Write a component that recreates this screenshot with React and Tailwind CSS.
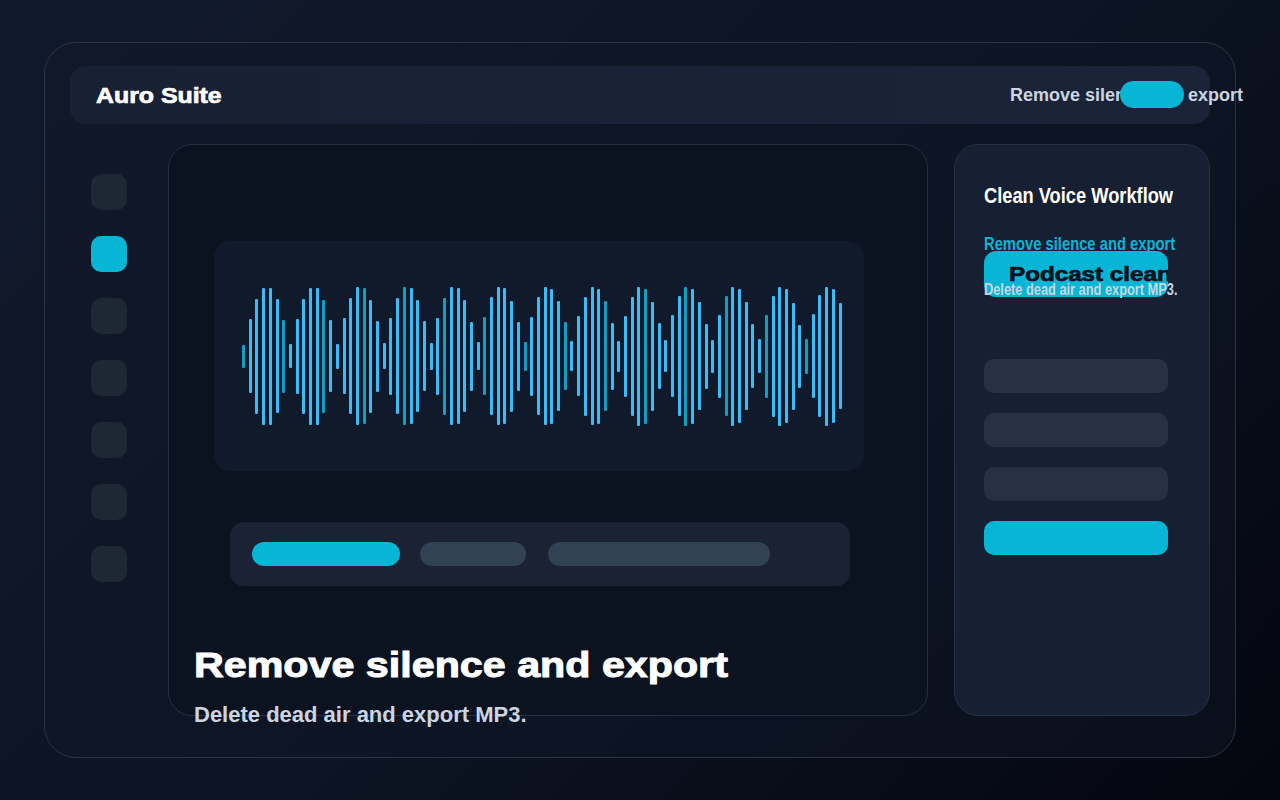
const bars = Array.from({ length: 90 }, (_, i) => ({
  h: Math.round(23 + 117 * Math.abs(Math.sin(i * 0.45))),
  teal: i % 6 === 0,
}));

const navItems = [false, true, false, false, false, false, false];

export default function App() {
  return (
    <div className="min-h-screen w-full overflow-hidden bg-[linear-gradient(135deg,#111a2d_0%,#0c1322_55%,#04060f_100%)] font-['Liberation_Sans',Arial,sans-serif]">
      <div className="pt-[42px] pl-[44px]">
        {/* Frame */}
        <div className="w-[1192px] h-[716px] rounded-[32px] border border-[#2a3344] bg-[linear-gradient(135deg,#111829_0%,#0d1424_60%,#0a0f1c_100%)] px-[25px] pt-[23px]">
          {/* Header */}
          <div className="h-[58px] rounded-[16px] bg-[linear-gradient(90deg,#182034_0%,#1a2338_100%)] flex items-center justify-between pl-[26px]">
            <span className="inline-block origin-left scale-x-[1.13] text-[22px] font-bold text-white [-webkit-text-stroke:0.7px_currentColor]">Auro Suite</span>
            <div className="relative mr-[-33px]">
              <span className="text-[18px] font-bold text-[#cbd5e1] whitespace-nowrap">Remove silence and export</span>
              <span className="absolute left-[110px] top-[-1px] w-[64px] h-[27px] rounded-full bg-[#06b6d4]" />
            </div>
          </div>

          {/* Body */}
          <div className="mt-[20px] flex h-[572px]">
            {/* Sidebar */}
            <div className="w-[98px] flex flex-col gap-[26px] pt-[30px] pl-[21px]">
              {navItems.map((active, i) => (
                <div
                  key={i}
                  className={active ? 'w-[36px] h-[36px] rounded-[10px] bg-[#06b6d4]' : 'w-[36px] h-[36px] rounded-[10px] bg-[#1e2734]'}
                />
              ))}
            </div>

            {/* Main panel */}
            <div className="w-[760px] h-full rounded-[24px] border border-[#243044] bg-[#0b1220] pt-[96px]">
              <div className="ml-[45px] w-[650px] h-[230px] rounded-[16px] bg-[#101a2b] flex items-center pl-[28px]">
                <div className="w-[600px] flex items-center justify-between">
                  {bars.map((b, i) => (
                    <div
                      key={i}
                      className={b.teal ? 'w-[3px] rounded-[1px] bg-[#0e9fc2]' : 'w-[3px] rounded-[1px] bg-[#38bdf8]'}
                      style={{ height: b.h }}
                    />
                  ))}
                </div>
              </div>

              <div className="mt-[51px] ml-[61px] w-[620px] h-[64px] rounded-[14px] bg-[#1a2234] flex items-center pl-[22px]">
                <div className="w-[148px] h-[24px] rounded-full bg-[#06b6d4]" />
                <div className="ml-[20px] w-[106px] h-[24px] rounded-full bg-[#334155]" />
                <div className="ml-[22px] w-[222px] h-[24px] rounded-full bg-[#334155]" />
              </div>

              <h1 className="mt-[58px] ml-[25px] text-[35px] leading-[1.2] font-bold text-white whitespace-nowrap">
                <span className="inline-block origin-left scale-x-[1.178] [-webkit-text-stroke:1px_currentColor]">Remove silence and export</span>
              </h1>
              <p className="mt-[16px] ml-[25px] text-[22px] leading-[1.2] font-bold text-[#cbd5e1] whitespace-nowrap">
                Delete dead air and export MP3.
              </p>
            </div>

            {/* Right panel */}
            <div className="ml-[26px] w-[256px] h-full rounded-[24px] border border-[#263043] bg-[#172033] pl-[29px] pt-[38px]">
              <h2 className="text-[22px] leading-[1.2] font-bold text-white whitespace-nowrap">
                <span className="inline-block origin-left scale-x-[0.83]">Clean Voice Workflow</span>
              </h2>
              <div className="mt-[25px] text-[18px] leading-[1.2] font-bold text-[#06b6d4] whitespace-nowrap">
                <span className="inline-block origin-left scale-x-[0.82]">Remove silence and export</span>
              </div>
              <div className="mt-[-5px] w-[184px] h-[46px] rounded-[12px] bg-[#06b6d4] overflow-hidden flex items-center pl-[25px]">
                <span className="inline-block origin-left scale-x-[1.21] text-[20px] font-bold text-[#0b1220] whitespace-nowrap [-webkit-text-stroke:0.7px_currentColor]">Podcast clean</span>
              </div>
              <div className="mt-[-17px] relative text-[16px] leading-[1.2] font-bold text-[#cbd5e1] whitespace-nowrap">
                <span className="inline-block origin-left scale-x-[0.8]">Delete dead air and export MP3.</span>
              </div>
              <div className="mt-[60px] flex flex-col gap-[20px]">
                <div className="w-[184px] h-[34px] rounded-[10px] bg-[#263243]" />
                <div className="w-[184px] h-[34px] rounded-[10px] bg-[#263243]" />
                <div className="w-[184px] h-[34px] rounded-[10px] bg-[#263243]" />
                <div className="w-[184px] h-[34px] rounded-[10px] bg-[#06b6d4]" />
              </div>
            </div>
          </div>
        </div>
      </div>
    </div>
  );
}
